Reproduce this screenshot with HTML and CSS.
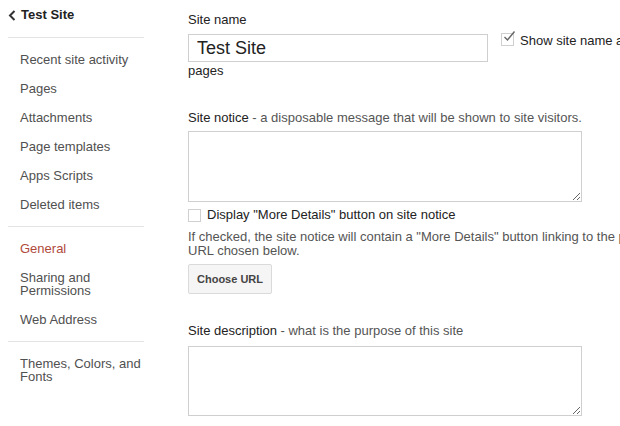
FILE: index.html
```html
<!DOCTYPE html>
<html>
<head>
<meta charset="utf-8">
<link rel="stylesheet" href="styles.css">
</head>
<body>
<div class="page">
  <nav class="sidebar">
    <div class="sb-header">
      <svg class="chev" width="8" height="11" viewBox="0 0 8 11"><path d="M6.5 1 L2 5.5 L6.5 10" fill="none" stroke="#333" stroke-width="2"/></svg>
      <span>Test Site</span>
    </div>
    <div class="sb-group">
      <div class="sb-item">Recent site activity</div>
      <div class="sb-item">Pages</div>
      <div class="sb-item">Attachments</div>
      <div class="sb-item">Page templates</div>
      <div class="sb-item">Apps Scripts</div>
      <div class="sb-item">Deleted items</div>
    </div>
    <div class="sb-group">
      <div class="sb-item active">General</div>
      <div class="sb-item">Sharing and<br>Permissions</div>
      <div class="sb-item">Web Address</div>
    </div>
    <div class="sb-group">
      <div class="sb-item">Themes, Colors, and<br>Fonts</div>
    </div>
  </nav>
  <main class="main">
    <div class="label">Site name</div>
    <div class="name-row">
      <input class="name-input" type="text" value="Test Site">
      <span class="cb checked"><svg width="14" height="14" viewBox="0 0 14 14"><path d="M2.5 7 L5.5 10 L12.5 1.5" fill="none" stroke="#666" stroke-width="1.4"/></svg></span>
      <span class="cb-text">Show site name at the top of</span>
    </div>
    <div class="wrap-line">pages</div>

    <div class="label notice-label">Site notice <span class="muted">- a disposable message that will be shown to site visitors.</span></div>
    <textarea class="ta ta-notice"></textarea>

    <div class="cb-row">
      <span class="cb"></span>
      <span class="cb-text">Display "More Details" button on site notice</span>
    </div>
    <p class="help">If checked, the site notice will contain a "More Details" button linking to the page URL chosen below.</p>
    <button class="btn">Choose URL</button>

    <div class="label desc-label">Site description <span class="muted">- what is the purpose of this site</span></div>
    <textarea class="ta ta-desc"></textarea>
  </main>
</div>
</body>
</html>
```
FILE: styles.css
```css
html, body {
  margin: 0;
  padding: 0;
  overflow: hidden;
  background: #fff;
}
body {
  font-family: "Liberation Sans", Arial, sans-serif;
  font-size: 13px;
  color: #222;
  width: 620px;
  height: 426px;
}
.page {
  display: flex;
  width: 900px;
}
.sidebar {
  width: 136px;
  margin-left: 8px;
  flex: none;
}
.sb-header {
  display: flex;
  align-items: center;
  gap: 5px;
  padding: 7px 0 14px 0;
  line-height: 16px;
  font-weight: bold;
  font-size: 13px;
  color: #222;
  border-bottom: 1px solid #e3e3e3;
}
.chev { display: block; }
.sb-group {
  padding: 7px 0 7px 0;
  border-bottom: 1px solid #e3e3e3;
}
.sb-group:last-child { border-bottom: none; }
.sb-item {
  padding: 8px 0 8px 12px;
  line-height: 13px;
  color: #505050;
}
.sb-item.active { color: #b04a3c; }
.main {
  margin-left: 44px;
  padding-top: 12px;
  width: 460px;
  flex: none;
}
.label {
  line-height: 16px;
  color: #222;
  margin-bottom: 6px;
  white-space: nowrap;
}
.muted { color: #555; }
.name-row {
  display: flex;
  align-items: flex-start;
}
.name-input {
  flex: none;
  box-sizing: border-box;
  width: 300px;
  height: 28px;
  margin: 0;
  border: 1px solid #cfcfcf;
  padding: 0 8px;
  font-family: "Liberation Sans", Arial, sans-serif;
  font-size: 18px;
  color: #222;
  outline: none;
}
.cb {
  box-sizing: border-box;
  width: 13px;
  height: 13px;
  border: 1px solid #d0d0d0;
  position: relative;
  flex: none;
  background: #fff;
}
.name-row .cb { margin: -1px 6px 0 13px; }
.cb svg {
  position: absolute;
  left: 0;
  top: -4px;
}
.cb-text {
  white-space: nowrap;
  line-height: 16px;
  color: #222;
}
.name-row .cb-text { margin-top: -1px; }
.wrap-line {
  margin-top: 1px;
  line-height: 16px;
}
.notice-label { margin-top: 31px; margin-bottom: 5px; }
.ta {
  display: block;
  box-sizing: border-box;
  width: 394px;
  height: 71px;
  margin: 0;
  border: 1px solid #cfcfcf;
  font-family: "Liberation Sans", Arial, sans-serif;
  font-size: 13px;
  outline: none;
}
.ta-desc { height: 70px; }
.cb-row {
  display: flex;
  align-items: center;
  gap: 6px;
  margin-top: 5px;
  height: 16px;
}
.help {
  margin: 7px 0 0 0;
  line-height: 14px;
  color: #555;
  width: 470px;
}
.btn {
  display: block;
  margin-top: 6px;
  height: 30px;
  width: 84px;
  padding: 0;
  border: 1px solid #dadada;
  border-radius: 2px;
  background: #f5f5f5;
  font-family: "Liberation Sans", Arial, sans-serif;
  font-size: 11px;
  font-weight: bold;
  color: #444;
}
.desc-label { margin-top: 29px; margin-bottom: 7px; }
```
